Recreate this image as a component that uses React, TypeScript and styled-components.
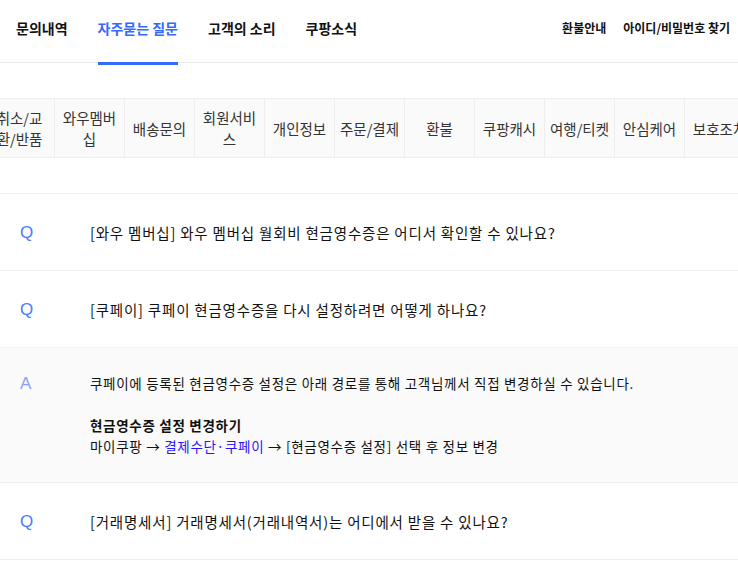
import * as React from "react"
import styled, { createGlobalStyle } from "styled-components"

const GlobalStyle = createGlobalStyle`
  html, body {
    margin: 0;
    padding: 0;
    background: #fff;
  }
  body {
    font-family: "Noto Sans CJK KR", "Noto Sans", sans-serif;
    color: #111;
    overflow: hidden;
  }
`

const Page = styled.main`
  width: 738px;
  overflow: hidden;
`

const Header = styled.header`
  display: flex;
  justify-content: space-between;
  align-items: flex-start;
  height: 63px;
  box-sizing: border-box;
  border-bottom: 1px solid #e9e9e9;
  padding: 0 8px 0 16px;
`

const Nav = styled.nav`
  display: flex;
  gap: 30px;
`

const NavTab = styled.a<{ $active?: boolean }>`
  box-sizing: border-box;
  height: 65px;
  padding-top: 18px;
  line-height: 20px;
  font-size: 14px;
  font-weight: 700;
  color: ${(p) => (p.$active ? "#346aff" : "#111")};
  border-bottom: 3px solid ${(p) => (p.$active ? "#346aff" : "transparent")};
  text-decoration: none;
  white-space: nowrap;
`

const Links = styled.div`
  display: flex;
  gap: 17px;
  padding-top: 19px;
`

const HeaderLink = styled.a`
  font-size: 12px;
  font-weight: 700;
  line-height: 18px;
  color: #111;
  text-decoration: none;
  white-space: nowrap;
`

const CategoryStrip = styled.div`
  margin-top: 35px;
  overflow: hidden;
`

const CategoryTrack = styled.ul`
  display: flex;
  list-style: none;
  margin: 0 0 0 -15px;
  padding: 0;
  width: max-content;
  border-top: 1px solid #eee;
  border-bottom: 1px solid #eee;
  background: #fafafa;
`

const Category = styled.li`
  box-sizing: border-box;
  width: 70px;
  height: 58px;
  display: flex;
  align-items: center;
  justify-content: center;
  padding: 0 3px;
  border-right: 1px solid #eee;
  font-size: 14.5px;
  line-height: 21px;
  color: #333;
  text-align: center;
  word-break: break-all;
`

const FaqList = styled.div`
  margin-top: 35px;
`

const QuestionRow = styled.div`
  display: grid;
  grid-template-columns: 70px 1fr;
  align-items: center;
  box-sizing: border-box;
  height: 77px;
  padding: 0 0 0 20px;
  border-top: 1px solid #eee;
`

const Mark = styled.span<{ $answer?: boolean }>`
  font-family: "Liberation Sans", Arial, sans-serif;
  font-size: 17px;
  line-height: 21px;
  color: ${(p) => (p.$answer ? "#8d9cff" : "#4a7bff")};
`

const QuestionText = styled.span`
  font-size: 14.5px;
  line-height: 21px;
  letter-spacing: 0.8px;
  color: #111;
  white-space: nowrap;
`

const AnswerRow = styled.div`
  display: grid;
  grid-template-columns: 70px 1fr;
  align-items: start;
  padding: 25px 0 25px 20px;
  background: #fafafa;
  border-top: 1px solid #f3f3f3;
`

const AnswerBody = styled.div`
  font-size: 13.5px;
  line-height: 21px;
  letter-spacing: 0.7px;
  color: #111;

  p {
    margin: 0;
  }
`

const Blank = styled.p`
  height: 21px;
`

const Strong = styled.strong`
  font-weight: 700;
`

const PathLink = styled.span`
  color: #2a14ff;
`

const categories = [
  "취소/교환/반품",
  "와우멤버십",
  "배송문의",
  "회원서비스",
  "개인정보",
  "주문/결제",
  "환불",
  "쿠팡캐시",
  "여행/티켓",
  "안심케어",
  "보호조치",
]

const App: React.FC = () => {
  return (
    <Page>
      <GlobalStyle />
      <Header>
        <Nav>
          <NavTab>문의내역</NavTab>
          <NavTab $active>자주묻는 질문</NavTab>
          <NavTab>고객의 소리</NavTab>
          <NavTab>쿠팡소식</NavTab>
        </Nav>
        <Links>
          <HeaderLink>환불안내</HeaderLink>
          <HeaderLink>아이디/비밀번호 찾기</HeaderLink>
        </Links>
      </Header>

      <CategoryStrip>
        <CategoryTrack>
          {categories.map((c) => (
            <Category key={c}>{c}</Category>
          ))}
        </CategoryTrack>
      </CategoryStrip>

      <FaqList>
        <QuestionRow>
          <Mark>Q</Mark>
          <QuestionText>[와우 멤버십] 와우 멤버십 월회비 현금영수증은 어디서 확인할 수 있나요?</QuestionText>
        </QuestionRow>
        <QuestionRow>
          <Mark>Q</Mark>
          <QuestionText>[쿠페이] 쿠페이 현금영수증을 다시 설정하려면 어떻게 하나요?</QuestionText>
        </QuestionRow>
        <AnswerRow>
          <Mark $answer>A</Mark>
          <AnswerBody>
            <p>쿠페이에 등록된 현금영수증 설정은 아래 경로를 통해 고객님께서 직접 변경하실 수 있습니다.</p>
            <Blank />
            <p><Strong>현금영수증 설정 변경하기</Strong></p>
            <p>
              마이쿠팡 → <PathLink>결제수단·쿠페이</PathLink> → [현금영수증 설정] 선택 후 정보 변경
            </p>
          </AnswerBody>
        </AnswerRow>
        <QuestionRow>
          <Mark>Q</Mark>
          <QuestionText>[거래명세서] 거래명세서(거래내역서)는 어디에서 받을 수 있나요?</QuestionText>
        </QuestionRow>
        <QuestionRow>
          <Mark>Q</Mark>
          <QuestionText>[세금계산서] 세금계산서는 어떻게 발급받나요?</QuestionText>
        </QuestionRow>
      </FaqList>
    </Page>
  )
}

export default App
